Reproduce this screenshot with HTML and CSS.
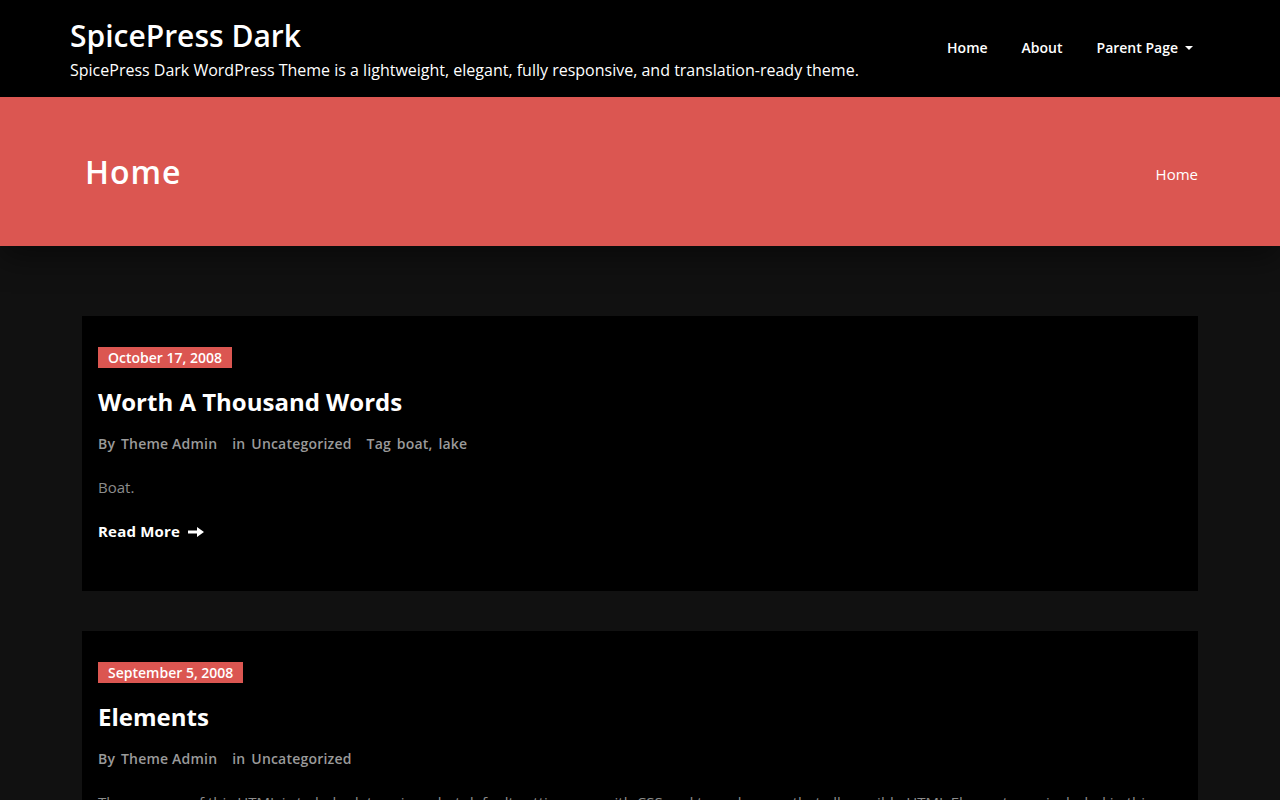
FILE: index.html
```html
<!DOCTYPE html>
<html lang="en">
<head>
<meta charset="utf-8">
<title>SpicePress Dark</title>
<link rel="stylesheet" href="styles.css">
</head>
<body>
<header class="site-header">
  <div class="container header-inner">
    <div class="brand">
      <h1 class="site-title">SpicePress Dark</h1>
      <p class="site-desc">SpicePress Dark WordPress Theme is a lightweight, elegant, fully responsive, and translation-ready theme.</p>
    </div>
    <nav class="main-nav">
      <a href="#">Home</a>
      <a href="#">About</a>
      <a href="#" class="has-sub">Parent Page <span class="caret"></span></a>
    </nav>
  </div>
</header>

<section class="page-banner">
  <div class="container banner-inner">
    <h2 class="page-title">Home</h2>
    <span class="crumb">Home</span>
  </div>
</section>

<main class="content">
  <div class="posts">
    <article class="post">
      <span class="post-date">October 17, 2008</span>
      <h3 class="post-title">Worth A Thousand Words</h3>
      <div class="post-meta">
        <span>By <a href="#">Theme Admin</a></span>
        <span>in <a href="#">Uncategorized</a></span>
        <span>Tag <a href="#">boat</a>, <a href="#">lake</a></span>
      </div>
      <p class="post-excerpt">Boat.</p>
      <a href="#" class="read-more">Read More
        <svg class="arrow" width="16" height="12" viewBox="0 0 16 12" aria-hidden="true">
          <path d="M0 4.5h9V1l7 5-7 5V7.5H0z" fill="#ffffff"/>
        </svg>
      </a>
    </article>

    <article class="post">
      <span class="post-date">September 5, 2008</span>
      <h3 class="post-title">Elements</h3>
      <div class="post-meta">
        <span>By <a href="#">Theme Admin</a></span>
        <span>in <a href="#">Uncategorized</a></span>
      </div>
      <p class="post-excerpt">The purpose of this HTML is to help determine what default settings are with CSS and to make sure that all possible HTML Elements are included in this post.</p>
    </article>
  </div>
</main>
</body>
</html>
```

FILE: styles.css
```css
* { box-sizing: border-box; }

html, body {
  margin: 0;
  padding: 0;
}

body {
  background: #111111;
  color: #ffffff;
  font-family: "Open Sans", "Noto Sans", sans-serif;
  overflow: hidden;
}

a { color: inherit; text-decoration: none; }

.container {
  width: 1140px;
  margin: 0 auto;
}

/* Header */
.site-header {
  background: #000000;
  height: 97px;
}

.header-inner {
  display: flex;
  justify-content: space-between;
  align-items: flex-start;
}

.site-title {
  margin: 14px 0 0;
  font-size: 30px;
  font-weight: 600;
  line-height: 44px;
  color: #ffffff;
}

.site-desc {
  margin: 0;
  font-size: 16px;
  line-height: 24px;
  color: #ffffff;
}

.main-nav {
  display: flex;
  margin-top: 37px;
  margin-right: 0;
}

.main-nav a {
  font-size: 14px;
  font-weight: 600;
  line-height: 21px;
  padding: 0 17px;
  color: #ffffff;
  display: flex;
  align-items: center;
}

.caret {
  display: inline-block;
  width: 0;
  height: 0;
  margin-left: 7px;
  border-left: 4px solid transparent;
  border-right: 4px solid transparent;
  border-top: 4px solid #ffffff;
}

/* Banner */
.page-banner {
  background: #db5651;
  height: 149px;
  position: relative;
  box-shadow: 0 12px 30px rgba(0, 0, 0, 0.45);
}

.banner-inner {
  height: 100%;
  display: flex;
  justify-content: space-between;
  align-items: center;
  padding: 0 12px 0 15px;
}

.page-title {
  margin: 0;
  font-size: 32px;
  font-weight: 600;
  letter-spacing: 1px;
  line-height: 44px;
  color: #ffffff;
}

.crumb {
  font-size: 15px;
  color: #ffffff;
  margin-top: 4px;
}

/* Posts */
.content {
  padding-top: 70px;
}

.posts {
  width: 1116px;
  margin: 0 auto 0 82px;
  display: flex;
  flex-direction: column;
  gap: 40px;
}

.post {
  background: #000000;
  padding: 31px 16px 49px;
  display: flex;
  flex-direction: column;
  align-items: flex-start;
}

.post-date {
  background: #db5651;
  color: #ffffff;
  font-size: 14px;
  font-weight: 600;
  line-height: 21px;
  padding: 0 10px;
}

.post-title {
  margin: 16px 0 0;
  font-size: 24px;
  font-weight: 700;
  line-height: 36px;
  color: #ffffff;
}

.post-meta {
  margin-top: 13px;
  display: flex;
  gap: 15px;
  font-size: 14px;
  font-weight: 600;
  letter-spacing: 0.2px;
  line-height: 21px;
  color: #9a9a9a;
}

.post-meta a { margin-left: 2px; }

.post-excerpt {
  margin: 22px 0 0;
  font-size: 15px;
  line-height: 22px;
  color: #8c8c8c;
}

.read-more {
  margin-top: 22px;
  font-size: 15px;
  font-weight: 700;
  letter-spacing: 0.2px;
  line-height: 22px;
  color: #ffffff;
  display: flex;
  align-items: center;
}

.arrow {
  margin-left: 8px;
  margin-top: 1px;
}
```
